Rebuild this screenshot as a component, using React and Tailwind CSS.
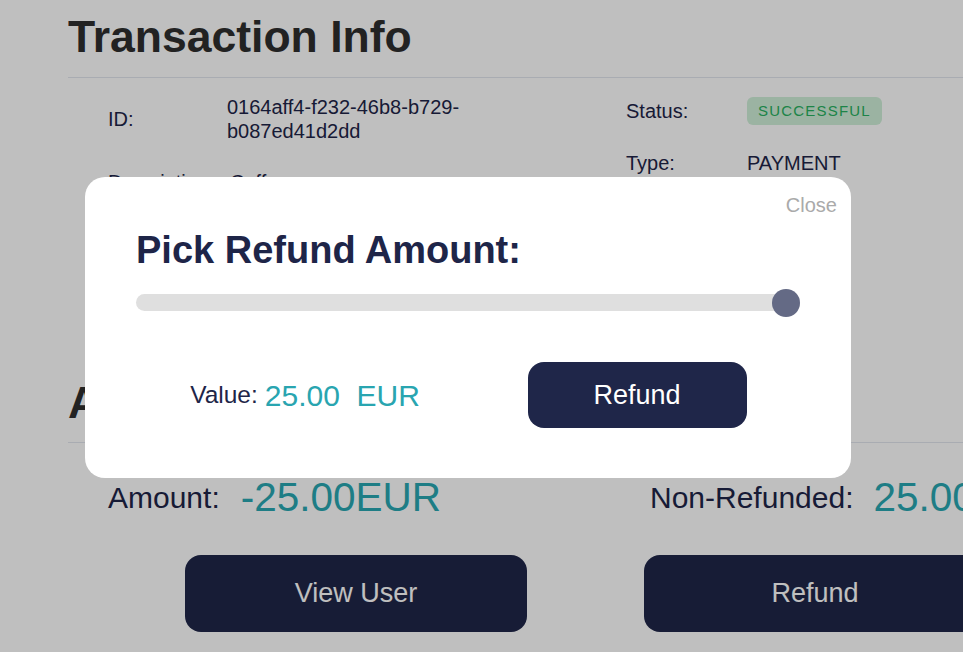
export default function App() {
  return (
    <div className="relative w-[963px] h-[652px] overflow-hidden bg-white font-['Liberation_Sans',Arial,sans-serif]">
      <div className="w-[1200px] pl-[68px]">
        <h1 className="mt-3 h-[50px] leading-[50px] text-[44.5px] font-bold text-[#2e2e2e]">Transaction Info</h1>
        <div className="mt-[15px] h-px bg-[#e2e6ee]" />
        <div className="h-[300px] grid grid-cols-[518px_518px] pl-[40px] pt-[5px] text-[20px] leading-[24px] text-[#1e2548]">
          <div className="flex flex-col">
            <div className="flex items-center py-3">
              <div className="w-[119px]">ID:</div>
              <div>
                0164aff4-f232-46b8-b729-
                <br />
                b087ed41d2dd
              </div>
            </div>
            <div className="flex items-center pt-[15px] pb-3">
              <div className="w-[122px]">Description:</div>
              <div>Coffee</div>
            </div>
            <div className="flex items-center py-3">
              <div className="w-[122px]">Date:</div>
              <div>2023-05-14</div>
            </div>
          </div>
          <div className="flex flex-col">
            <div className="flex items-center py-3">
              <div className="w-[121px]">Status:</div>
              <div className="h-8 flex items-center">
                <span className="h-7 px-[11px] flex items-center rounded-md bg-[#cfefd8] text-[#27b160] text-[15px] tracking-[0.08em]">
                  SUCCESSFUL
                </span>
              </div>
            </div>
            <div className="flex items-center py-3">
              <div className="w-[121px]">Type:</div>
              <div>PAYMENT</div>
            </div>
            <div className="flex items-center py-3">
              <div className="w-[121px]">Method:</div>
              <div>CARD</div>
            </div>
          </div>
        </div>
        <h1 className="h-[50px] leading-[50px] text-[44.5px] font-bold text-[#2e2e2e]">Amount Info</h1>
        <div className="mt-[14px] h-px bg-[#e2e6ee]" />
        <div className="mt-[31px] h-[46px] flex items-center">
          <div className="w-[582px] pl-[40px] flex items-center gap-[21px]">
            <span className="text-[30px] text-[#1e2548]">Amount:</span>
            <span className="text-[40.5px] text-[#29a7b2]">-25.00EUR</span>
          </div>
          <div className="flex items-center gap-[20px]">
            <span className="text-[30px] text-[#1e2548]">Non-Refunded:</span>
            <span className="text-[40.5px] text-[#29a7b2]">25.00EUR</span>
          </div>
        </div>
        <div className="mt-[35px] flex gap-[117px] pl-[117px]">
          <button className="w-[342px] h-[77px] rounded-[16px] bg-[#1f2649] text-white text-[27px]">View User</button>
          <button className="w-[342px] h-[77px] rounded-[16px] bg-[#1f2649] text-white text-[27px]">Refund</button>
        </div>
      </div>

      <div className="absolute inset-0 bg-black/25" />

      <div className="absolute left-[85px] top-[177px] w-[766px] h-[301px] rounded-[20px] bg-white pl-[51px]">
        <div className="absolute right-[14px] top-[17px] text-[20px] leading-[23px] text-[#aaaaaa]">Close</div>
        <h2 className="mt-[52px] text-[38px] leading-[42px] font-bold text-[#1e2548]">Pick Refund Amount:</h2>
        <div className="mt-[23px] relative w-[664px] h-[17px] rounded-full bg-[#dfdfdf]">
          <div className="absolute right-0 top-1/2 -translate-y-1/2 w-7 h-7 rounded-full bg-[#646a85]" />
        </div>
        <div className="mt-[51px] ml-[3px] w-[664px] grid grid-cols-2 items-center">
          <div className="flex items-center justify-center">
            <span className="text-[24.5px] text-[#1e2548]">Value:</span>
            <span className="ml-[7px] text-[30px] text-[#29a5b0]">25.00&nbsp;&nbsp;EUR</span>
          </div>
          <div className="flex justify-center">
            <button className="w-[219px] h-[66px] rounded-[16px] bg-[#1f2649] text-white text-[27px]">Refund</button>
          </div>
        </div>
      </div>
    </div>
  );
}
